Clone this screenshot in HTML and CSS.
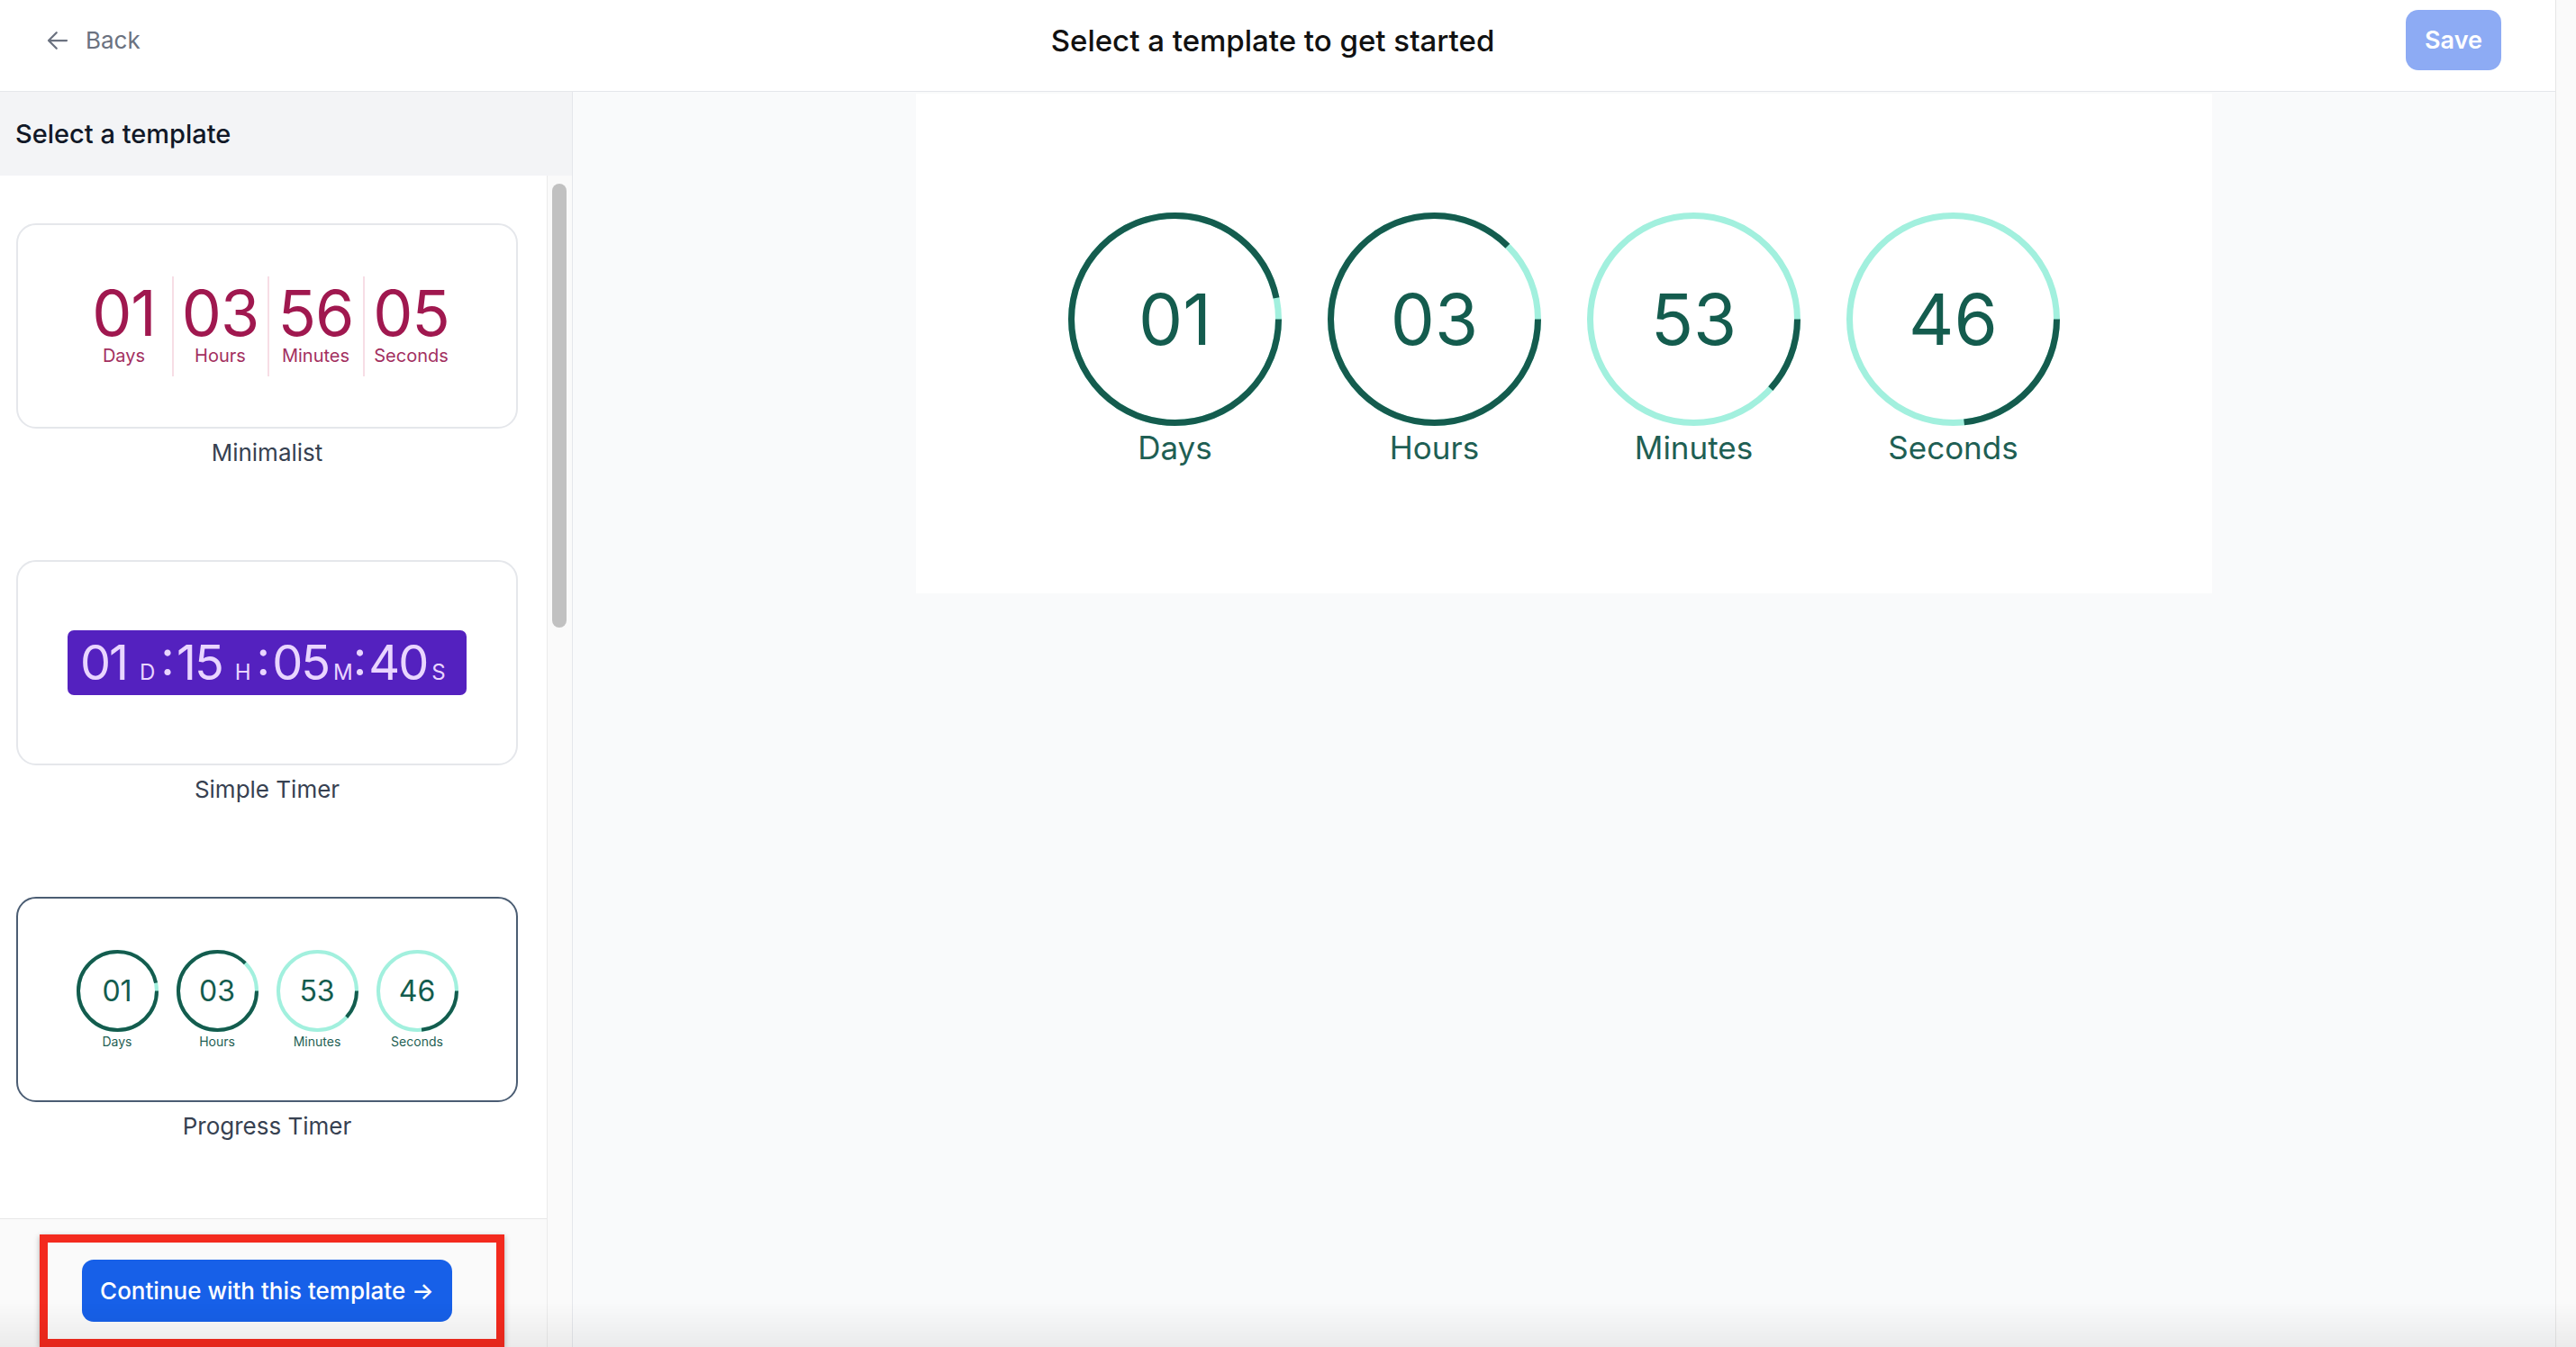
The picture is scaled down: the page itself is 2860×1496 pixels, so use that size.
FILE: index.html
```html
<!DOCTYPE html>
<html lang="en">
<head>
    <meta charset="UTF-8">
    <meta name="viewport" content="width=device-width, initial-scale=1.0">
    <title>Select a template</title>
    <link rel="stylesheet" href="styles.css">
</head>
<body>

<div class="app">
    <div class="page">
        <header class="topbar">
            <a class="back-link" href="#">
                <svg class="back-icon" viewBox="0 0 24 24" fill="none" stroke="currentColor" stroke-width="1.8" stroke-linecap="round" stroke-linejoin="round">
                    <path d="M20 12H4M11 5l-7 7 7 7"/>
                </svg>
                Back
            </a>
            <h1 class="topbar-title">Select a template to get started</h1>
            <button class="save-btn" disabled>Save</button>
        </header>

        <div class="workspace">
            <aside class="sidebar">
                <div class="sidebar-head">Select a template</div>
                <div class="sidebar-body">
                    <div class="sidebar-main">
                        <div class="template-list">

                            <!-- Minimalist -->
                            <div class="template-item">
                                <div class="template-card">
                                    <div class="minimal-timer">
                                        <div class="minimal-unit"><span class="minimal-num">01</span><span class="minimal-label">Days</span></div>
                                        <div class="minimal-unit"><span class="minimal-num">03</span><span class="minimal-label">Hours</span></div>
                                        <div class="minimal-unit"><span class="minimal-num">56</span><span class="minimal-label">Minutes</span></div>
                                        <div class="minimal-unit"><span class="minimal-num">05</span><span class="minimal-label">Seconds</span></div>
                                    </div>
                                </div>
                                <div class="template-name">Minimalist</div>
                            </div>

                            <!-- Simple Timer -->
                            <div class="template-item">
                                <div class="template-card">
                                    <div class="simple-timer">
                                        <span class="st-num">01</span><span class="st-unit spaced">D</span><span class="st-colon">:</span>
                                        <span class="st-num">15</span><span class="st-unit spaced">H</span><span class="st-colon">:</span>
                                        <span class="st-num">05</span><span class="st-unit">M</span><span class="st-colon">:</span>
                                        <span class="st-num">40</span><span class="st-unit">S</span>
                                    </div>
                                </div>
                                <div class="template-name">Simple Timer</div>
                            </div>

                            <!-- Progress Timer (selected) -->
                            <div class="template-item">
                                <div class="template-card selected">
                                    <div class="ring-timer small">
                                        <div class="ring-unit">
                                            <div class="ring">
                                                <svg viewBox="0 0 91 91"><circle class="ring-track" cx="45.5" cy="45.5" r="43.5"/><circle class="ring-fill" cx="45.5" cy="45.5" r="43.5" pathLength="100" stroke-dasharray="96.7 100"/></svg>
                                                <span class="ring-num">01</span>
                                            </div>
                                            <span class="ring-label">Days</span>
                                        </div>
                                        <div class="ring-unit">
                                            <div class="ring">
                                                <svg viewBox="0 0 91 91"><circle class="ring-track" cx="45.5" cy="45.5" r="43.5"/><circle class="ring-fill" cx="45.5" cy="45.5" r="43.5" pathLength="100" stroke-dasharray="87.5 100"/></svg>
                                                <span class="ring-num">03</span>
                                            </div>
                                            <span class="ring-label">Hours</span>
                                        </div>
                                        <div class="ring-unit">
                                            <div class="ring">
                                                <svg viewBox="0 0 91 91"><circle class="ring-track" cx="45.5" cy="45.5" r="43.5"/><circle class="ring-fill" cx="45.5" cy="45.5" r="43.5" pathLength="100" stroke-dasharray="11.7 100"/></svg>
                                                <span class="ring-num">53</span>
                                            </div>
                                            <span class="ring-label">Minutes</span>
                                        </div>
                                        <div class="ring-unit">
                                            <div class="ring">
                                                <svg viewBox="0 0 91 91"><circle class="ring-track" cx="45.5" cy="45.5" r="43.5"/><circle class="ring-fill" cx="45.5" cy="45.5" r="43.5" pathLength="100" stroke-dasharray="23.3 100"/></svg>
                                                <span class="ring-num">46</span>
                                            </div>
                                            <span class="ring-label">Seconds</span>
                                        </div>
                                    </div>
                                </div>
                                <div class="template-name">Progress Timer</div>
                            </div>

                        </div>

                        <div class="sidebar-foot">
                            <button class="continue-btn">Continue with this template →</button>
                            <div class="highlight-box"></div>
                        </div>
                    </div>
                    <div class="scroll-rail"><div class="scroll-thumb"></div></div>
                </div>
            </aside>

            <main class="preview-area">
                <div class="preview-card">
                    <div class="ring-timer large">
                        <div class="ring-unit">
                            <div class="ring">
                                <svg viewBox="0 0 237 237"><circle class="ring-track" cx="118.5" cy="118.5" r="115"/><circle class="ring-fill" cx="118.5" cy="118.5" r="115" pathLength="100" stroke-dasharray="96.7 100"/></svg>
                                <span class="ring-num">01</span>
                            </div>
                            <span class="ring-label">Days</span>
                        </div>
                        <div class="ring-unit">
                            <div class="ring">
                                <svg viewBox="0 0 237 237"><circle class="ring-track" cx="118.5" cy="118.5" r="115"/><circle class="ring-fill" cx="118.5" cy="118.5" r="115" pathLength="100" stroke-dasharray="87.5 100"/></svg>
                                <span class="ring-num">03</span>
                            </div>
                            <span class="ring-label">Hours</span>
                        </div>
                        <div class="ring-unit">
                            <div class="ring">
                                <svg viewBox="0 0 237 237"><circle class="ring-track" cx="118.5" cy="118.5" r="115"/><circle class="ring-fill" cx="118.5" cy="118.5" r="115" pathLength="100" stroke-dasharray="11.7 100"/></svg>
                                <span class="ring-num">53</span>
                            </div>
                            <span class="ring-label">Minutes</span>
                        </div>
                        <div class="ring-unit">
                            <div class="ring">
                                <svg viewBox="0 0 237 237"><circle class="ring-track" cx="118.5" cy="118.5" r="115"/><circle class="ring-fill" cx="118.5" cy="118.5" r="115" pathLength="100" stroke-dasharray="23.3 100"/></svg>
                                <span class="ring-num">46</span>
                            </div>
                            <span class="ring-label">Seconds</span>
                        </div>
                    </div>
                </div>
            </main>
        </div>
    </div>
    <div class="page-rail"></div>
</div>

<div class="bottom-fade"></div>

</body>
</html>
```

FILE: styles.css
```css
* {
    box-sizing: border-box;
}

body {
    margin: 0;
    font-family: "Inter", "Noto Sans", sans-serif;
    color: #111827;
    background-color: #ffffff;
    overflow: hidden;
}

.app {
    display: flex;
    height: 100vh;
}

.page {
    flex: 1;
    display: flex;
    flex-direction: column;
    min-width: 0;
}

/* top bar */
.topbar {
    display: grid;
    grid-template-columns: 1fr auto 1fr;
    align-items: center;
    height: 102px;
    padding: 11px 60px 23px 49px;
    border-bottom: 1px solid #e5e7eb;
    background-color: #fff;
}

.back-link {
    display: flex;
    align-items: center;
    gap: 16px;
    color: #6b7280;
    font-size: 26px;
    text-decoration: none;
    justify-self: start;
}

.back-icon {
    width: 30px;
    height: 30px;
}

.topbar-title {
    margin: 0;
    font-size: 33px;
    font-weight: 500;
    color: #111111;
}

.save-btn {
    justify-self: end;
    width: 106px;
    height: 67px;
    border: none;
    border-radius: 14px;
    background-color: #8dabf4;
    color: #fff;
    font-family: inherit;
    font-size: 27px;
    font-weight: 600;
}

.workspace {
    flex: 1;
    display: flex;
    min-height: 0;
}

/* sidebar */
.sidebar {
    width: 636px;
    display: flex;
    flex-direction: column;
    border-right: 1px solid #e5e7eb;
}

.sidebar-head {
    height: 93px;
    display: flex;
    align-items: center;
    padding-left: 17px;
    background-color: #f3f4f6;
    font-size: 29px;
    font-weight: 500;
    color: #111827;
}

.sidebar-body {
    flex: 1;
    display: flex;
    min-height: 0;
}

.sidebar-main {
    flex: 1;
    display: flex;
    flex-direction: column;
    min-width: 0;
}

.template-list {
    flex: 1;
    overflow: hidden;
    padding: 53px 32px 0 18px;
    background-color: #fff;
}

.template-item {
    margin-bottom: 101px;
}

.template-card {
    height: 228px;
    display: flex;
    align-items: center;
    justify-content: center;
    border: 2px solid #e5e7eb;
    border-radius: 22px;
    background-color: #fff;
}

.template-card.selected {
    border-color: #4b5d73;
}

.template-name {
    margin-top: 9px;
    line-height: 36px;
    text-align: center;
    font-size: 26px;
    font-weight: 400;
    color: #374151;
}

.sidebar-foot {
    position: relative;
    height: 143px;
    display: flex;
    justify-content: center;
    align-items: flex-start;
    padding: 45px 32px 0 18px;
    border-top: 1px solid #e8e8e8;
    background-color: #fafafa;
}

.continue-btn {
    width: 411px;
    height: 69px;
    border: none;
    border-radius: 13px;
    background-color: #1760e8;
    color: #fff;
    font-family: inherit;
    font-size: 26px;
    font-weight: 500;
}

/* red annotation frame drawn over the footer */
.highlight-box {
    position: absolute;
    left: 44px;
    top: 17px;
    width: 516px;
    bottom: 0;
    border: 9px solid #f32a1e;
    box-shadow: 0 2px 6px rgba(0, 0, 0, 0.3);
    pointer-events: none;
}

.scroll-rail {
    width: 28px;
    padding: 9px 6px 0 5px;
    border-left: 1px solid #ebebeb;
    background-color: #fafafa;
}

.scroll-thumb {
    height: 493px;
    border-radius: 8px;
    background-color: #c1c1c1;
}

.page-rail {
    width: 23px;
    border-left: 1px solid #e6e6e6;
    background-color: #fafafa;
}

/* minimalist preview */
.minimal-timer {
    display: flex;
}

.minimal-unit {
    width: 106px;
    display: flex;
    flex-direction: column;
    align-items: center;
    padding: 6px 0 10px;
    color: #a0184f;
}

.minimal-unit + .minimal-unit {
    border-left: 2px solid #f7dde5;
}

.minimal-num {
    font-size: 70px;
    line-height: 70px;
    letter-spacing: -1px;
}

.minimal-label {
    font-size: 20px;
    line-height: 25px;
    color: #a3305f;
}

/* simple timer preview */
.simple-timer {
    width: 443px;
    height: 72px;
    display: flex;
    align-items: baseline;
    padding: 9px 10px 9px 14px;
    border-radius: 7px;
    background-color: #5421bf;
    color: #e9d5ff;
}

.st-num {
    font-size: 54px;
    line-height: 54px;
    letter-spacing: -2px;
}

.st-unit {
    font-size: 24px;
    margin-left: 5px;
}

.st-unit.spaced {
    margin-left: 14px;
    margin-right: 6px;
}

.st-colon {
    font-size: 54px;
    line-height: 54px;
    margin-right: 2px;
    transform: translateY(-5px);
}

/* progress ring timer */
.ring-timer {
    display: flex;
}

.ring-unit {
    display: flex;
    flex-direction: column;
    align-items: center;
}

.ring {
    display: grid;
    place-items: center;
}

.ring > * {
    grid-area: 1 / 1;
}

.ring svg {
    display: block;
}

.ring-track {
    fill: none;
    stroke: #a2f0de;
}

.ring-fill {
    fill: none;
    stroke: #145c4e;
}

.ring-num {
    color: #145c4e;
    line-height: 1;
}

.ring-label {
    color: #1f5f54;
}

.ring-timer.small {
    gap: 20px;
}

.ring-timer.small .ring svg {
    width: 91px;
    height: 91px;
}

.ring-timer.small circle {
    stroke-width: 4;
}

.ring-timer.small .ring-num {
    font-size: 32px;
}

.ring-timer.small .ring-label {
    font-size: 14px;
    line-height: 17px;
    margin-top: 2px;
}

.ring-timer.large {
    gap: 51px;
}

.ring-timer.large .ring svg {
    width: 237px;
    height: 237px;
}

.ring-timer.large circle {
    stroke-width: 7;
}

.ring-timer.large .ring-num {
    font-size: 78px;
}

.ring-timer.large .ring-label {
    font-size: 35px;
    line-height: 42px;
    margin-top: 3px;
}

/* preview */
.preview-area {
    flex: 1;
    display: flex;
    justify-content: center;
    align-items: flex-start;
    padding-top: 2px;
    background-color: #f9fafb;
}

.preview-card {
    width: 1439px;
    display: flex;
    justify-content: center;
    padding: 132px 0 141px;
    background-color: #fff;
}

.bottom-fade {
    position: fixed;
    left: 0;
    right: 0;
    bottom: 0;
    height: 50px;
    background: linear-gradient(to bottom, rgba(0, 0, 0, 0), rgba(0, 0, 0, 0.06));
    pointer-events: none;
}
```
